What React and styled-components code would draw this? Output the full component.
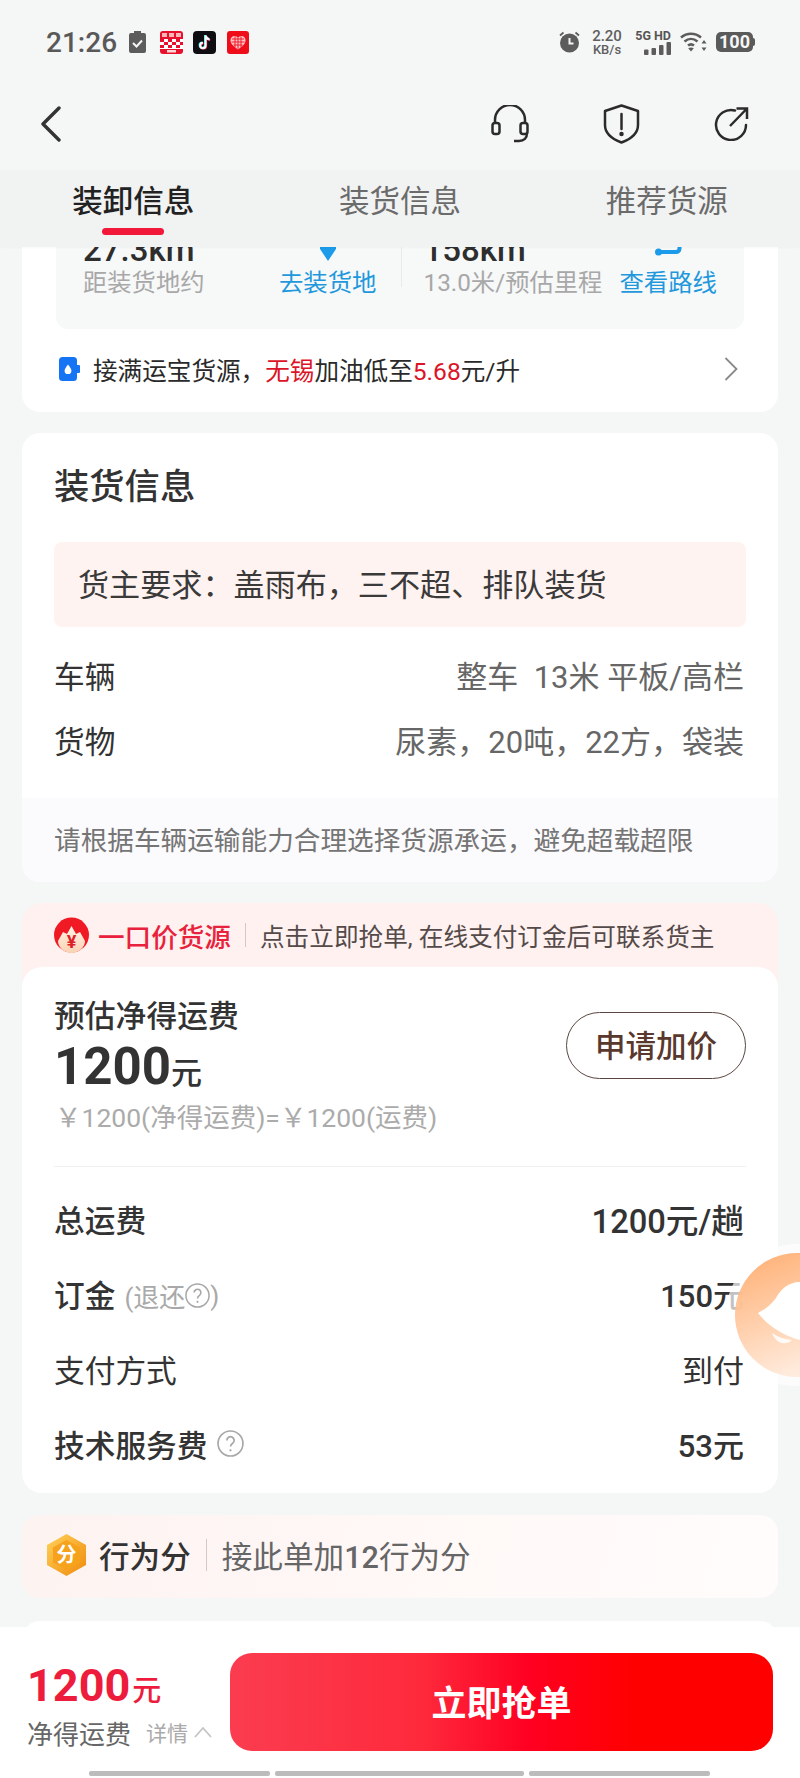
import React from 'react'
import styled, { createGlobalStyle } from 'styled-components'

const GlobalStyle = createGlobalStyle`
    html, body {
        margin: 0;
        padding: 0;
        background: #f5f6f6;
    }
    * {
        box-sizing: border-box;
    }
    body {
        font-family: Roboto, "Noto Sans CJK SC", sans-serif;
        color: #333;
    }
`

const Page = styled.div`
    position: relative;
    width: 800px;
    height: 1778px;
    overflow: hidden;
    display: flex;
    flex-direction: column;
    background: #f5f6f6;
`

/* status bar */
const StatusBar = styled.div`
    height: 84px;
    padding: 0 45px 0 46px;
    display: flex;
    align-items: center;
    justify-content: space-between;
`

const StatusGroup = styled.div`
    display: flex;
    align-items: center;
`

const Time = styled.span`
    width: 68px;
    font-size: 28px;
    font-weight: 500;
    color: #595959;
    margin-right: 15px;
    white-space: nowrap;
`

const AppIcon = styled.svg`
    display: block;
    margin-right: ${p => p.$gap || 0}px;
`

const Speed = styled.div`
    width: 34px;
    margin: 0 10px 0 10px;
    display: flex;
    flex-direction: column;
    align-items: center;
    color: #5f5f5f;
    font-weight: 500;
`

const SpeedValue = styled.span`
    font-size: 15px;
    line-height: 15px;
`

const SpeedUnit = styled.span`
    font-size: 13px;
    line-height: 12px;
`

const Network = styled.div`
    width: 37px;
    margin-right: 9px;
    display: flex;
    flex-direction: column;
    align-items: flex-end;
`

const NetworkLabel = styled.span`
    font-size: 12.5px;
    line-height: 13px;
    font-weight: 700;
    color: #555;
    white-space: nowrap;
`

const Battery = styled.div`
    position: relative;
    width: 37px;
    height: 20px;
    margin-left: 9px;
    margin-right: 2px;
    border-radius: 5px;
    background: #5a5a5a;
    color: #f5f6f6;
    font-size: 18px;
    font-weight: 700;
    line-height: 20px;
    text-align: center;

    &::after {
        content: '';
        position: absolute;
        top: 6px;
        right: -2px;
        width: 2px;
        height: 8px;
        border-radius: 0 2px 2px 0;
        background: #5a5a5a;
    }
`

/* nav bar */
const NavBar = styled.div`
    height: 86px;
    padding: 0 51px 6px 40px;
    display: flex;
    align-items: center;
    justify-content: space-between;
`

const NavActions = styled.div`
    display: flex;
    align-items: center;
    gap: 74px;
`

/* tabs */
const Tabs = styled.div`
    position: relative;
    z-index: 2;
    height: 77px;
    display: grid;
    grid-template-columns: repeat(3, 1fr);
    background: #f1f2f2;
    box-shadow: 0 1px 2px rgba(0, 0, 0, 0.03);
`

const Tab = styled.div`
    padding-top: 11px;
    display: flex;
    flex-direction: column;
    align-items: center;
`

const TabLabel = styled.span`
    font-size: 30.5px;
    line-height: 42px;
    font-weight: ${p => (p.$active ? 500 : 400)};
    color: ${p => (p.$active ? '#222' : '#6b6b6b')};
`

const TabLine = styled.i`
    display: block;
    width: 62px;
    height: 7px;
    margin-top: 5px;
    border-radius: 4px;
    background: #f2183a;
`

/* scrolling content */
const Content = styled.div`
    height: 1380px;
    padding: 0 22px;
    overflow: hidden;
`

const Card = styled.div`
    margin-top: ${p => p.$top || 0}px;
    background: #fff;
    border-radius: 18px;
    overflow: hidden;
`

const Panel = styled.div`
    margin: 0 34px;
    height: 142px;
    padding-bottom: 30px;
    display: flex;
    align-items: flex-end;
    background: #f7f8f8;
    border-radius: 0 0 12px 12px;
`

const PanelHalf = styled.div`
    flex: 1;
    display: flex;
    align-items: flex-end;
    justify-content: space-between;
    padding: ${p => p.$pad};
`

const PanelDivider = styled.div`
    width: 1px;
    height: 60px;
    margin-bottom: 12px;
    background: #e9eaea;
`

const Stat = styled.div`
    display: flex;
    flex-direction: column;
`

const StatValue = styled.span`
    font-size: 33px;
    line-height: 34px;
    font-weight: 500;
    color: #2e2e2e;
`

const StatLabel = styled.span`
    font-size: 24.3px;
    line-height: 32px;
    color: #a8a8a8;
    white-space: nowrap;
`

const MapAction = styled.div`
    display: flex;
    flex-direction: column;
    align-items: center;
    gap: 6px;
`

const MapLabel = styled.span`
    font-size: 24.4px;
    line-height: 32px;
    color: #1f98dc;
    white-space: nowrap;
`

const PromoRow = styled.div`
    height: 83px;
    padding: 0 40px 3px 37px;
    display: flex;
    align-items: center;
`

const PromoText = styled.span`
    margin-left: 13px;
    font-size: 24.6px;
    color: #2a2a2a;
`

const Red = styled.span`
    color: #dc1427;
`

const PromoArrow = styled.svg`
    margin-left: auto;
`

const CardTitle = styled.div`
    padding: 30px 32px 0;
    font-size: 35.3px;
    line-height: 48px;
    font-weight: 500;
    color: #333;
`

const Notice = styled.div`
    height: 85px;
    margin: 31px 32px 15px;
    padding: 0 0 4px 24px;
    display: flex;
    align-items: center;
    border-radius: 8px;
    background: #fff3f1;
    font-size: 31.1px;
    color: #3a3a3a;
`

const Row = styled.div`
    height: ${p => p.$height || 65}px;
    padding: 0 34px 0 32px;
    display: flex;
    align-items: center;
    justify-content: space-between;
    font-size: 30.7px;
    color: #333;
`

const RowLabel = styled.span`
    display: flex;
    align-items: center;
    font-weight: ${p => (p.$bold ? 500 : 400)};
`

const RowValue = styled.span`
    font-size: ${p => p.$size || 31}px;
    font-weight: ${p => (p.$bold ? 500 : 400)};
    color: ${p => p.$color || '#333'};
    white-space: pre;
`

const Disclaimer = styled.div`
    height: 84px;
    margin-top: 26px;
    padding: 0 0 4px 32px;
    display: flex;
    align-items: center;
    background: #fbfafc;
    font-size: 26.65px;
    color: #757575;
`

/* fixed price card */
const PriceCard = styled.div`
    margin-top: 21px;
    border-radius: 20px;
    background: #fff1ef;
    overflow: hidden;
`

const PriceBanner = styled.div`
    height: 64px;
    padding: 0 0 0 32px;
    display: flex;
    align-items: center;
`

const BannerTitle = styled.span`
    margin-left: 9px;
    font-size: 26.6px;
    font-weight: 500;
    color: #e8223c;
`

const VLine = styled.i`
    display: block;
    width: 1px;
    height: ${p => p.$height}px;
    margin: 0 ${p => p.$right}px 0 ${p => p.$left}px;
    background: #cfc9c8;
`

const BannerText = styled.span`
    font-size: 24.65px;
    color: #544a4a;
`

const PriceBody = styled.div`
    height: 526px;
    padding-top: 29px;
    background: #fff;
    border-radius: 20px 20px 0 0;
`

const PriceTop = styled.div`
    padding: 0 32px;
    display: flex;
    align-items: flex-start;
    justify-content: space-between;
`

const PriceTitle = styled.div`
    font-size: 30.8px;
    line-height: 42px;
    font-weight: 500;
    color: #333;
`

const Amount = styled.div`
    margin-top: 1px;
    line-height: 56px;
    font-size: 51px;
    font-weight: 700;
    color: #333;

    small {
        font-size: 31px;
        line-height: 1;
        font-weight: 500;
    }
`

const Formula = styled.div`
    margin: 5px 0 0 1px;
    font-size: 26.5px;
    line-height: 36px;
    color: #ababab;
`

const RaiseButton = styled.button`
    width: 180px;
    height: 67px;
    margin-top: 16px;
    padding: 0 0 4px;
    border: 1px solid #5a4641;
    border-radius: 34px;
    background: #fff;
    font: inherit;
    font-size: 30.5px;
    font-weight: 500;
    color: #59382e;
`

const Rule = styled.div`
    height: 1px;
    margin: 30px 32px 14px;
    background: #f0f0f0;
`

const Hint = styled.span`
    margin: 4px 0 0 9px;
    font-size: 26px;
    font-weight: 400;
    color: #a9a9a9;
    display: flex;
    align-items: center;
`

const HelpIcon = styled.svg`
    display: block;
    margin-left: ${p => p.$left || 0}px;
`

/* score card */
const ScoreCard = styled.div`
    height: 83px;
    margin-top: 22px;
    padding: 0 0 3px 25px;
    display: flex;
    align-items: center;
    border-radius: 18px;
    background: linear-gradient(105deg, #fdf3f1 0%, #fff9f8 60%, #fffcfb 100%);
`

const ScoreTitle = styled.span`
    margin-left: 13px;
    font-size: 30.6px;
    font-weight: 500;
    color: #333;
`

const ScoreText = styled.span`
    font-size: 30.6px;
    color: #666;

    b {
        font-weight: 500;
    }
`

const NextCard = styled.div`
    height: 60px;
    margin-top: 23px;
    border-radius: 18px 18px 0 0;
    background: #fff;
`

/* floating bubble */
const Bubble = styled.div`
    position: absolute;
    top: 1240px;
    right: 0;
    z-index: 3;
    line-height: 0;
`

/* bottom bar */
const BottomBar = styled.div`
    position: relative;
    z-index: 1;
    height: 151px;
    padding-top: 26px;
    background: #fff;
`

const BottomMain = styled.div`
    height: 98px;
    padding: 0 27px 0 27px;
    display: flex;
    justify-content: space-between;
`

const Net = styled.div`
    padding-top: 8px;
`

const NetAmount = styled.div`
    font-size: 45px;
    line-height: 50px;
    font-weight: 700;
    color: #ee1c3c;

    small {
        margin-left: 2px;
        font-size: 29px;
        line-height: 1;
        font-weight: 500;
    }
`

const NetInfo = styled.div`
    margin-top: 3px;
    height: 36px;
    display: flex;
    align-items: center;
    font-size: 26px;
    color: #666;
`

const Details = styled.span`
    margin-left: 15px;
    font-size: 21px;
    color: #aaa;
`

const Caret = styled.svg`
    margin-left: 6px;
`

const GrabButton = styled.button`
    width: 543px;
    height: 98px;
    padding: 0 0 4px;
    border: none;
    border-radius: 22px;
    background: linear-gradient(90deg, #fb3c50 0%, #fe2a3c 35%, #ff0022 55%, #ff0000 75%);
    font: inherit;
    font-size: 35px;
    font-weight: 700;
    color: #fff;
`

const HomeBar = styled.div`
    margin: 20px 0 0 89px;
    display: flex;
    gap: 5px;
`

const HomeSegment = styled.i`
    display: block;
    width: ${p => p.$width}px;
    height: 5px;
    border-radius: 2px;
    background: #bcbcbc;
`

const Help = ({ size, left }) => (
    <HelpIcon $left={left} width={size} height={size} viewBox="0 0 26 26" fill="none">
        <circle cx="13" cy="13" r="12" stroke="#a8a8a8" strokeWidth="1.6" />
        <path d="M9.5 10a3.5 3.5 0 1 1 5.6 2.8c-1.3 1-2.1 1.6-2.1 3.2" stroke="#a8a8a8" strokeWidth="1.7" />
        <circle cx="13" cy="19.6" r="1.1" fill="#a8a8a8" />
    </HelpIcon>
)

export default function App() {
    return (
        <Page>
            <GlobalStyle />
            <StatusBar>
                <StatusGroup>
                    <Time>21:26</Time>
                    <AppIcon $gap={14} width="17" height="22" viewBox="0 0 17 22">
                        <path d="M5 0h7v2h3a2 2 0 0 1 2 2v16a2 2 0 0 1-2 2H2a2 2 0 0 1-2-2V4a2 2 0 0 1 2-2h3z" fill="#5c5c5c" />
                        <path d="M4 12l3.5 3.5L13 9.5" stroke="#f5f6f6" strokeWidth="2" fill="none" />
                    </AppIcon>
                    <AppIcon $gap={10} width="23" height="23" viewBox="0 0 23 23">
                        <rect width="23" height="23" rx="3" fill="#e8112d" />
                        <rect x="0" y="8" width="23" height="10" fill="#fff" />
                        <path d="M0 8h4v3H0zM8 8h4v3H8zM16 8h4v3h-4zM4 11h4v3H4zM12 11h4v3h-4zM20 11h3v3h-3zM0 14h4v3H0zM8 14h4v3H8zM16 14h4v3h-4z" fill="#e8112d" />
                        <path d="M2 2h5v4H2zM9 2h5v4H9zM16 2h5v4h-5z" fill="#ffb6b6" />
                        <rect x="7" y="19" width="9" height="2.500" fill="#ffd6d6" />
                    </AppIcon>
                    <AppIcon $gap={11} width="23" height="23" viewBox="0 0 23 23">
                        <rect width="23" height="23" rx="4" fill="#0d0d12" />
                        <path d="M12.600 4.500v10a2.700 2.700 0 1 1-2.700-2.700M12.600 4.500c.3 2.300 1.700 3.700 4 4" stroke="#25f4ee" strokeWidth="2" fill="none" transform="translate(-.6 -.4)" />
                        <path d="M12.600 4.500v10a2.700 2.700 0 1 1-2.700-2.700M12.600 4.500c.3 2.300 1.700 3.700 4 4" stroke="#fe2c55" strokeWidth="2" fill="none" transform="translate(.6 .4)" />
                        <path d="M12.600 4.500v10a2.700 2.700 0 1 1-2.700-2.700M12.600 4.500c.3 2.300 1.700 3.700 4 4" stroke="#fff" strokeWidth="2" fill="none" />
                    </AppIcon>
                    <AppIcon width="22" height="23" viewBox="0 0 22 23">
                        <rect width="22" height="23" rx="3" fill="#f00d1a" />
                        <path d="M11 18.500C6 15 3.500 12.500 3.500 9.200 3.500 6.800 5.300 5 7.500 5c1.500 0 2.700.7 3.500 2 .8-1.300 2-2 3.500-2 2.200 0 4 1.800 4 4.200 0 3.300-2.500 5.800-7.500 9.300z" fill="#ffc4c8" />
                        <path d="M5 8h12M4.500 11h13M6.500 14h9M8 5.500v11M11 7v11M14 5.500v11" stroke="#f00d1a" strokeWidth="0.9" />
                    </AppIcon>
                </StatusGroup>
                <StatusGroup>
                    <AppIcon width="21" height="22" viewBox="0 0 21 22">
                        <circle cx="10.500" cy="12" r="9.500" fill="#5c5c5c" />
                        <path d="M10.500 7v5.500h4" stroke="#f5f6f6" strokeWidth="2" fill="none" />
                        <path d="M1 4.500L4.500 1.500M20 4.500L16.500 1.500" stroke="#5c5c5c" strokeWidth="1.800" />
                    </AppIcon>
                    <Speed>
                        <SpeedValue>2.20</SpeedValue>
                        <SpeedUnit>KB/s</SpeedUnit>
                    </Speed>
                    <Network>
                        <NetworkLabel>5G HD</NetworkLabel>
                        <AppIcon width="27" height="13" viewBox="0 0 27 13">
                            <rect x="0" y="7.500" width="4.500" height="5.500" rx="1" fill="#5c5c5c" />
                            <rect x="7.500" y="6" width="4.500" height="7" rx="1" fill="#5c5c5c" />
                            <rect x="15" y="3" width="4.500" height="10" rx="1" fill="#5c5c5c" />
                            <rect x="22.500" y="0" width="4.500" height="13" rx="1" fill="#5c5c5c" />
                        </AppIcon>
                    </Network>
                    <AppIcon width="27" height="20" viewBox="0 0 27 20">
                        <path d="M1 5.500C7 .5 15 .5 21 5.500" stroke="#5c5c5c" strokeWidth="2.600" fill="none" />
                        <path d="M4.500 9.500c4-3.400 9-3.400 13 0" stroke="#5c5c5c" strokeWidth="2.600" fill="none" />
                        <path d="M8 13.500c2-1.600 4-1.600 6 0" stroke="#5c5c5c" strokeWidth="2.600" fill="none" />
                        <path d="M11 19.500l-2.800-3.200c1.800-1 3.800-1 5.600 0z" fill="#5c5c5c" />
                        <path d="M24 8l2.500 3.500h-5zM24 19l-2.500-3.500h5z" fill="#5c5c5c" />
                    </AppIcon>
                    <Battery>100</Battery>
                </StatusGroup>
            </StatusBar>

            <NavBar>
                <svg width="21" height="36" viewBox="0 0 21 36" fill="none">
                    <path d="M19 2L3 18l16 16" stroke="#333" strokeWidth="3.400" strokeLinecap="round" strokeLinejoin="round" />
                </svg>
                <NavActions>
                    <svg width="38" height="38" viewBox="0 0 38 38" fill="none" stroke="#2b2b2b" strokeWidth="2.500">
                        <path d="M4 19V15a15 15 0 0 1 30 0v4" />
                        <rect x="1.500" y="18" width="7" height="11" rx="2.500" />
                        <rect x="29.500" y="18" width="7" height="11" rx="2.500" />
                        <path d="M36 28c0 5-3 8-8 8h-5" />
                    </svg>
                    <svg width="37" height="40" viewBox="0 0 37 40" fill="none" stroke="#2b2b2b" strokeWidth="2.500">
                        <path d="M18.500 1.500L35 7v14c0 9-7 14-16.500 17.500C9 35 2 30 2 21V7z" strokeLinejoin="round" />
                        <path d="M18.500 10v15" strokeLinecap="round" />
                        <circle cx="18.500" cy="30" r="1" fill="#2b2b2b" />
                    </svg>
                    <svg width="35" height="34" viewBox="0 0 35 34" fill="none" stroke="#2b2b2b" strokeWidth="2.500">
                        <path d="M21 3.500A15 15 0 1 0 32 18" strokeLinecap="round" />
                        <path d="M16 19L32.500 2M22.500 1.500H33V12" />
                    </svg>
                </NavActions>
            </NavBar>

            <Tabs>
                <Tab>
                    <TabLabel $active>装卸信息</TabLabel>
                    <TabLine />
                </Tab>
                <Tab>
                    <TabLabel>装货信息</TabLabel>
                </Tab>
                <Tab>
                    <TabLabel>推荐货源</TabLabel>
                </Tab>
            </Tabs>

            <Content>
                <Card $top={-60}>
                    <Panel>
                        <PanelHalf $pad="0 24px 0 27px">
                            <Stat>
                                <StatValue>27.3km</StatValue>
                                <StatLabel>距装货地约</StatLabel>
                            </Stat>
                            <MapAction>
                                <svg width="16" height="24" viewBox="0 0 16 24">
                                    <path d="M0 0h16v12L8 24 0 12z" fill="#1b9bea" />
                                </svg>
                                <MapLabel>去装货地</MapLabel>
                            </MapAction>
                        </PanelHalf>
                        <PanelDivider />
                        <PanelHalf $pad="0 27px 0 22px">
                            <Stat>
                                <StatValue>158km</StatValue>
                                <StatLabel>13.0米/预估里程</StatLabel>
                            </Stat>
                            <MapAction>
                                <svg width="28" height="24" viewBox="0 0 28 24" fill="none" stroke="#1b9bea" strokeWidth="4">
                                    <path d="M2 5h20a3.500 3.500 0 0 1 3.500 3.500v3a3.500 3.500 0 0 1-3.500 3.500H5" />
                                    <circle cx="4.500" cy="15" r="3.500" fill="#1b9bea" stroke="none" />
                                </svg>
                                <MapLabel>查看路线</MapLabel>
                            </MapAction>
                        </PanelHalf>
                    </Panel>
                    <PromoRow>
                        <svg width="21" height="24" viewBox="0 0 21 24">
                            <rect x="0" y="0" width="18" height="24" rx="3.500" fill="#1474f4" />
                            <rect x="17" y="8" width="4" height="8" rx="1" fill="#1474f4" />
                            <path d="M9 7.500c2.300 3 3.400 4.700 3.400 6.200a3.400 3.400 0 0 1-6.800 0c0-1.500 1.100-3.200 3.400-6.200z" fill="#fff" />
                        </svg>
                        <PromoText>
                            接满运宝货源，<Red>无锡</Red>加油低至<Red>5.68</Red>元/升
                        </PromoText>
                        <PromoArrow width="14" height="24" viewBox="0 0 14 24" fill="none">
                            <path d="M1.500 1L12.500 12 1.500 23" stroke="#8a8a8a" strokeWidth="1.800" />
                        </PromoArrow>
                    </PromoRow>
                </Card>

                <Card $top={21}>
                    <CardTitle>装货信息</CardTitle>
                    <Notice>货主要求：盖雨布，三不超、排队装货</Notice>
                    <Row>
                        <RowLabel>车辆</RowLabel>
                        <RowValue $color="#666">{'整车  13米 平板/高栏'}</RowValue>
                    </Row>
                    <Row>
                        <RowLabel>货物</RowLabel>
                        <RowValue $color="#666">尿素，20吨，22方，袋装</RowValue>
                    </Row>
                    <Disclaimer>请根据车辆运输能力合理选择货源承运，避免超载超限</Disclaimer>
                </Card>

                <PriceCard>
                    <PriceBanner>
                        <svg width="35" height="36" viewBox="0 0 35 36">
                            <defs>
                                <linearGradient id="coin" x1="0" y1="0" x2="0" y2="1">
                                    <stop offset="0" stopColor="#fff4e6" />
                                    <stop offset="1" stopColor="#fbd2b4" />
                                </linearGradient>
                            </defs>
                            <circle cx="17.500" cy="18" r="17.500" fill="#f01a24" />
                            <path d="M4 24L9 15l4 2 4.500-8 4.500 8 4-2 5 9c0 7-7 12-13.500 12S4 31 4 24z" fill="url(#coin)" />
                            <text x="17.500" y="31" textAnchor="middle" fontSize="18" fontWeight="700" fill="#dc2028" fontFamily="Roboto, sans-serif">¥</text>
                        </svg>
                        <BannerTitle>一口价货源</BannerTitle>
                        <VLine $height={24} $left={14} $right={14} />
                        <BannerText>点击立即抢单, 在线支付订金后可联系货主</BannerText>
                    </PriceBanner>
                    <PriceBody>
                        <PriceTop>
                            <div>
                                <PriceTitle>预估净得运费</PriceTitle>
                                <Amount>1200<small>元</small></Amount>
                                <Formula>￥1200(净得运费)=￥1200(运费)</Formula>
                            </div>
                            <RaiseButton>申请加价</RaiseButton>
                        </PriceTop>
                        <Rule />
                        <Row $height={75}>
                            <RowLabel $bold>总运费</RowLabel>
                            <RowValue $bold $size={32.7}>1200元/趟</RowValue>
                        </Row>
                        <Row $height={75}>
                            <RowLabel $bold>
                                订金
                                <Hint>(退还<Help size={25} />)</Hint>
                            </RowLabel>
                            <RowValue $bold>150元</RowValue>
                        </Row>
                        <Row $height={75}>
                            <RowLabel>支付方式</RowLabel>
                            <RowValue>到付</RowValue>
                        </Row>
                        <Row $height={75}>
                            <RowLabel $bold>
                                技术服务费
                                <Help size={27} left={10} />
                            </RowLabel>
                            <RowValue $bold>53元</RowValue>
                        </Row>
                    </PriceBody>
                </PriceCard>

                <ScoreCard>
                    <svg width="39" height="42" viewBox="0 0 39 42">
                        <defs>
                            <linearGradient id="hex" x1="0" y1="0" x2="1" y2="1">
                                <stop offset="0" stopColor="#ffd25a" />
                                <stop offset="1" stopColor="#f08a0c" />
                            </linearGradient>
                        </defs>
                        <path d="M19.500 0L39 11v20L19.500 42 0 31V11z" fill="url(#hex)" />
                        <path d="M19.500 6L33 13.500v15L19.500 36 6 28.500v-15z" fill="#f7a21c" />
                        <text x="19.500" y="28" textAnchor="middle" fontSize="20" fontWeight="700" fill="#fff" fontFamily="Noto Sans CJK SC, sans-serif">分</text>
                    </svg>
                    <ScoreTitle>行为分</ScoreTitle>
                    <VLine $height={32} $left={15} $right={15} />
                    <ScoreText>接此单加<b>12</b>行为分</ScoreText>
                </ScoreCard>

                <NextCard />
            </Content>

            <BottomBar>
                <BottomMain>
                    <Net>
                        <NetAmount>1200<small>元</small></NetAmount>
                        <NetInfo>
                            净得运费
                            <Details>详情</Details>
                            <Caret width="18" height="12" viewBox="0 0 18 12" fill="none">
                                <path d="M1 11l8-9 8 9" stroke="#c4c4c4" strokeWidth="1.800" />
                            </Caret>
                        </NetInfo>
                    </Net>
                    <GrabButton>立即抢单</GrabButton>
                </BottomMain>
                <HomeBar>
                    <HomeSegment $width={181} />
                    <HomeSegment $width={249} />
                    <HomeSegment $width={181} />
                </HomeBar>
            </BottomBar>

            <Bubble>
                <svg width="72" height="150" viewBox="0 0 72 150">
                    <defs>
                        <linearGradient id="bubble" x1="0" y1="0" x2="0.400" y2="1">
                            <stop offset="0" stopColor="#ffa765" />
                            <stop offset="1" stopColor="#ffeadb" />
                        </linearGradient>
                    </defs>
                    <circle cx="69" cy="75" r="71" fill="#fff" opacity="0.7" />
                    <circle cx="69" cy="75" r="62" fill="url(#bubble)" opacity="0.93" />
                    <path d="M72 42C60 42 52 50 48 58 42 66 36 70 30 73 40 86 56 96 72 100z" fill="#fff" />
                    <path d="M44 93c6 4 12 6 20 7-6 6-16 4-20-7z" fill="#fff" opacity="0.85" />
                </svg>
            </Bubble>
        </Page>
    )
}
